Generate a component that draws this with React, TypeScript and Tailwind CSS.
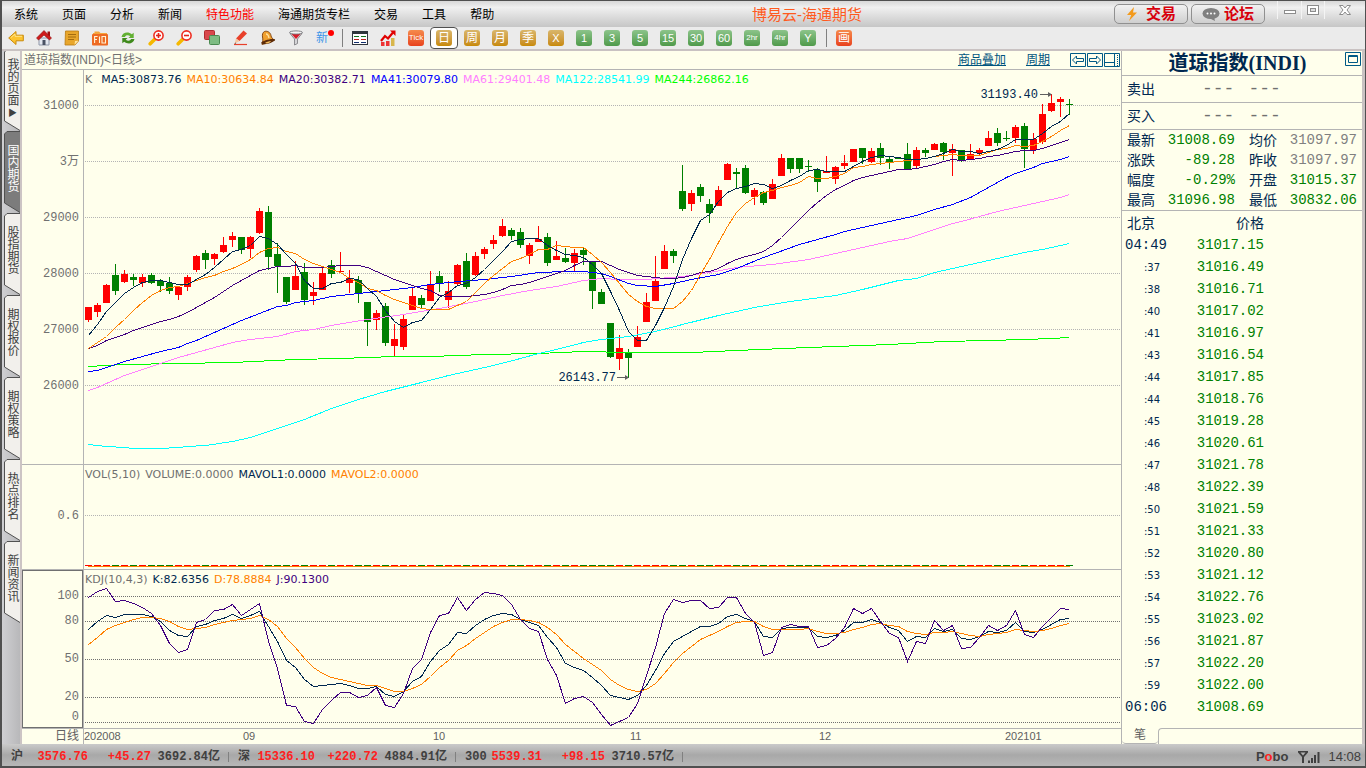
import { type ReactNode, useState } from 'react';

const MONO =
    "[font-family:'Liberation_Mono','Noto_Sans_CJK_SC',monospace]";
const SANS = "[font-family:'Liberation_Sans','Noto_Sans_CJK_SC',sans-serif]";
const LEGEND = "[font-family:'DejaVu_Sans','Noto_Sans_CJK_SC',sans-serif]";

const menus = [
    { name: '系统' },
    { name: '页面' },
    { name: '分析' },
    { name: '新闻' },
    { name: '特色功能', hot: true },
    { name: '海通期货专栏' },
    { name: '交易' },
    { name: '工具' },
    { name: '帮助' },
];

const sideTabs = [
    '国内期货',
    '股指期货',
    '期权报价',
    '期权策略',
    '热点排名',
    '新闻资讯',
];

const periods = [
    { name: 'Tick', tone: 'red' },
    { name: '日', tone: 'gold' },
    { name: '周', tone: 'gold' },
    { name: '月', tone: 'gold' },
    { name: '季', tone: 'gold' },
    { name: 'X', tone: 'gold' },
    { name: '1', tone: 'green' },
    { name: '3', tone: 'green' },
    { name: '5', tone: 'green' },
    { name: '15', tone: 'green' },
    { name: '30', tone: 'green' },
    { name: '60', tone: 'green' },
    { name: '2hr', tone: 'green' },
    { name: '4hr', tone: 'green' },
    { name: 'Y', tone: 'green' },
];

const quotes = [
    ['最新', '31008.69', '均价', '31097.97', false],
    ['涨跌', '-89.28', '昨收', '31097.97', false],
    ['幅度', '-0.29%', '开盘', '31015.37', true],
    ['最高', '31096.98', '最低', '30832.06', true],
] as const;

const ticks = [
    ['04:49', '31017.15'],
    [':37', '31016.49'],
    [':38', '31016.71'],
    [':40', '31017.02'],
    [':41', '31016.97'],
    [':43', '31016.54'],
    [':44', '31017.85'],
    [':44', '31018.76'],
    [':45', '31019.28'],
    [':46', '31020.61'],
    [':47', '31021.78'],
    [':48', '31022.39'],
    [':50', '31021.59'],
    [':51', '31021.33'],
    [':52', '31020.80'],
    [':53', '31021.12'],
    [':54', '31022.76'],
    [':55', '31023.02'],
    [':56', '31021.87'],
    [':57', '31022.20'],
    [':59', '31022.00'],
    ['06:06', '31008.69'],
];

const indexes = [
    { name: '沪', value: '3576.76', change: '+45.27', amount: '3692.84亿' },
    { name: '深', value: '15336.10', change: '+220.72', amount: '4884.91亿' },
    { name: '300', value: '5539.31', change: '+98.15', amount: '3710.57亿' },
];

// direction, body top, body bottom, high, low
type Candle = [0 | 1, number, number, number, number];

const candles: Candle[] = [
    [1, 307, 320, 307, 322], [1, 305, 312, 303, 317], [1, 285, 303, 284, 303],
    [0, 275, 291, 264, 295], [1, 274, 282, 270, 283], [0, 277, 280, 274, 286],
    [1, 277, 283, 274, 287], [0, 275, 283, 273, 284], [0, 281, 286, 279, 292],
    [0, 283, 291, 277, 294], [1, 287, 295, 287, 300], [1, 277, 287, 275, 291],
    [1, 256, 270, 255, 272], [0, 253, 260, 250, 269], [1, 254, 259, 253, 265],
    [1, 245, 252, 237, 253], [1, 236, 240, 232, 247], [0, 237, 250, 237, 254],
    [1, 237, 249, 236, 258], [1, 211, 233, 208, 234], [0, 212, 257, 206, 270],
    [0, 254, 266, 243, 293], [0, 277, 302, 277, 304], [1, 276, 290, 261, 290],
    [0, 272, 300, 263, 305], [1, 292, 296, 282, 305], [1, 273, 290, 267, 290],
    [0, 265, 274, 260, 278], [1, 271, 272, 252, 272], [1, 278, 283, 270, 293],
    [0, 280, 293, 276, 303], [0, 302, 322, 302, 346], [1, 313, 320, 310, 330],
    [0, 306, 343, 303, 346], [1, 339, 346, 324, 356], [1, 319, 347, 315, 350],
    [1, 296, 310, 288, 310], [0, 298, 305, 295, 309], [1, 285, 301, 271, 301],
    [0, 276, 284, 271, 292], [1, 291, 300, 281, 308], [1, 265, 284, 264, 285],
    [0, 261, 287, 253, 289], [1, 256, 275, 252, 276], [1, 249, 254, 247, 259],
    [1, 240, 244, 235, 249], [1, 226, 236, 219, 237], [0, 230, 236, 228, 240],
    [0, 232, 245, 228, 248], [1, 245, 256, 243, 264], [1, 239, 242, 226, 242],
    [0, 237, 263, 233, 266], [1, 256, 260, 241, 260], [0, 258, 262, 248, 263],
    [1, 253, 263, 249, 271], [0, 250, 255, 247, 265], [0, 262, 291, 261, 309],
    [0, 292, 304, 289, 304], [0, 323, 357, 323, 358], [1, 348, 359, 335, 370],
    [0, 353, 358, 349, 378], [1, 337, 347, 326, 347], [1, 302, 322, 293, 322],
    [1, 281, 301, 256, 301], [1, 251, 269, 245, 269], [0, 251, 256, 249, 263],
    [0, 191, 209, 165, 211], [1, 193, 204, 190, 211], [0, 187, 196, 184, 202],
    [0, 204, 213, 199, 223], [1, 190, 206, 186, 206], [1, 164, 180, 163, 180],
    [0, 172, 174, 168, 189], [0, 168, 193, 165, 194], [1, 190, 197, 188, 205],
    [0, 192, 203, 191, 205], [1, 184, 199, 179, 199], [1, 158, 176, 154, 176],
    [0, 158, 169, 158, 173], [0, 158, 169, 158, 173], [0, 166, 167, 160, 172],
    [0, 170, 182, 168, 192], [1, 171, 173, 156, 173], [1, 167, 179, 166, 184],
    [1, 163, 166, 155, 169], [1, 149, 162, 149, 162], [0, 148, 158, 148, 164],
    [1, 151, 162, 148, 163], [0, 148, 158, 143, 165], [0, 159, 162, 157, 169],
    [0, 158, 159, 158, 159], [0, 154, 170, 143, 170], [1, 150, 166, 147, 169],
    [0, 150, 153, 148, 157], [1, 144, 150, 143, 150], [0, 143, 152, 142, 160],
    [1, 149, 153, 144, 176], [0, 150, 161, 150, 162], [1, 154, 159, 144, 160],
    [1, 150, 153, 148, 156], [1, 138, 146, 131, 146], [0, 133, 143, 128, 146],
    [0, 138, 139, 131, 141], [1, 127, 138, 125, 143], [0, 126, 149, 123, 168],
    [1, 139, 150, 133, 154], [1, 114, 142, 104, 144], [1, 103, 111, 94, 112],
    [1, 99, 102, 97, 117], [0, 104, 105, 99, 115],
];

const ma5 = [
    335, 324, 311, 302, 293, 287, 282, 280, 280, 282, 284, 284, 279, 274, 267,
    259, 251, 249, 245, 236, 238, 244, 254, 263, 280, 288, 288, 283, 282, 278,
    279, 288, 296, 310, 321, 327, 322, 320, 309, 297, 292, 285, 283, 277, 269,
    260, 251, 241, 239, 238, 238, 245, 250, 254, 255, 257, 264, 273, 291, 310,
    331, 340, 340, 325, 307, 286, 259, 238, 220, 214, 201, 192, 188, 186, 183,
    184, 188, 185, 180, 176, 170, 169, 171, 171, 171, 166, 161, 157, 155, 156,
    157, 159, 159, 158, 156, 153, 149, 151, 151, 153, 151, 149, 145, 139, 139,
    139, 133, 126, 121, 113,
];

const ma10 = [
    348, 342, 336, 327, 319, 310, 302, 295, 290, 287, 286, 283, 280, 277, 275,
    271, 268, 264, 259, 252, 248, 247, 251, 253, 259, 263, 266, 269, 272, 278,
    282, 288, 290, 295, 299, 302, 305, 308, 309, 309, 309, 305, 301, 292, 283,
    275, 268, 261, 258, 254, 249, 249, 245, 246, 247, 247, 254, 262, 272, 283,
    294, 301, 306, 308, 308, 308, 301, 290, 274, 259, 242, 226, 212, 203, 197,
    192, 190, 187, 185, 182, 176, 178, 178, 176, 173, 167, 166, 164, 163, 162,
    161, 160, 159, 158, 156, 155, 154, 155, 155, 155, 152, 149, 148, 145, 146,
    145, 141, 136, 130, 125,
];

const ma20 = [
    348, 345, 340, 337, 334, 330, 327, 324, 321, 319, 316, 312, 307, 302, 297,
    291, 285, 280, 275, 270, 268, 266, 266, 265, 267, 267, 267, 266, 265, 265,
    265, 267, 271, 275, 279, 282, 285, 288, 290, 295, 296, 296, 296, 295, 294,
    292, 289, 285, 284, 282, 279, 276, 273, 270, 265, 261, 261, 261, 265, 269,
    272, 275, 276, 277, 278, 278, 277, 275, 272, 271, 268, 263, 259, 256, 254,
    251, 245, 237, 228, 219, 210, 202, 195, 189, 185, 180, 177, 175, 173, 171,
    169, 169, 168, 166, 164, 161, 159, 160, 159, 158, 156, 155, 153, 151, 150,
    150, 148, 145, 142, 139,
];

// the slow averages only need a point where they bend: [candle, y]
const ma41 = [
    [0, 371], [1, 370], [2, 367], [4, 361], [6, 356], [8, 351], [10, 347],
    [11, 343], [12, 340], [13, 336], [14, 332], [17, 320], [19, 313],
    [21, 306], [22, 305], [23, 302], [25, 300], [27, 296], [30, 293],
    [33, 290], [36, 287], [38, 284], [40, 282], [44, 279], [47, 276],
    [50, 272], [53, 271], [55, 271], [57, 273], [58, 276], [60, 283],
    [61, 285], [63, 286], [65, 283], [67, 279], [70, 274], [72, 268],
    [75, 257], [79, 244], [83, 234], [84, 231], [88, 223], [92, 215],
    [94, 209], [96, 204], [98, 197], [100, 187], [102, 177], [103, 173],
    [105, 167], [106, 163], [108, 159], [109, 156],
];

const ma61 = [
    [0, 390], [1, 387], [4, 375], [8, 363], [10, 357], [12, 352], [16, 342],
    [18, 339], [21, 336], [23, 331], [25, 329], [27, 325], [31, 319],
    [35, 314], [39, 308], [43, 301], [46, 295], [49, 290], [52, 286],
    [55, 280], [57, 278], [59, 279], [62, 279], [66, 276], [69, 272],
    [72, 267], [76, 264], [80, 259], [83, 253], [85, 249], [89, 241],
    [91, 238], [93, 232], [96, 223], [97, 221], [99, 216], [101, 211],
    [103, 207], [105, 203], [108, 197], [109, 194],
];

const ma122 = [
    [0, 444], [2, 446], [4, 447], [5, 448], [8, 448], [10, 447], [11, 446],
    [13, 445], [16, 441], [18, 437], [20, 431], [22, 425], [24, 419],
    [27, 408], [30, 399], [33, 391], [37, 382], [40, 375], [42, 371],
    [45, 365], [48, 358], [50, 353], [52, 349], [55, 342], [57, 339],
    [60, 336], [63, 331], [66, 324], [70, 315], [74, 307], [78, 301],
    [83, 295], [86, 289], [90, 280], [92, 278], [94, 272], [97, 266],
    [100, 260], [104, 252], [106, 249], [109, 243],
];

const ma244 = [
    [0, 366], [4, 364], [10, 363], [16, 362], [23, 359], [28, 358], [31, 357],
    [34, 356], [38, 356], [44, 354], [50, 353], [55, 351], [60, 352],
    [67, 352], [72, 350], [80, 347], [83, 346], [89, 344], [95, 341],
    [100, 340], [104, 339], [107, 338], [109, 337],
];

const lineJ = [
    597, 591, 588, 601, 600, 603, 607, 613, 625, 643, 652, 649, 622, 619, 610,
    609, 604, 615, 609, 603, 641, 668, 705, 706, 721, 723, 709, 700, 692, 692,
    697, 695, 687, 705, 707, 693, 668, 659, 632, 615, 613, 597, 610, 599, 592,
    593, 595, 604, 619, 628, 631, 659, 675, 703, 698, 696, 702, 714, 725, 721,
    717, 703, 675, 647, 613, 599, 602, 600, 600, 608, 607, 597, 597, 613, 622,
    655, 652, 627, 624, 626, 626, 647, 645, 638, 627, 608, 613, 608, 621, 633,
    637, 661, 641, 643, 620, 630, 625, 648, 647, 637, 625, 630, 625, 610, 634,
    637, 626, 617, 608, 609,
];

const lineK = [
    629, 621, 615, 617, 614, 614, 614, 616, 621, 630, 635, 636, 626, 624, 620,
    618, 614, 618, 615, 611, 626, 641, 660, 667, 679, 686, 685, 684, 683, 685,
    688, 688, 686, 694, 696, 691, 681, 676, 661, 650, 644, 632, 633, 625, 619,
    615, 613, 614, 619, 622, 625, 637, 647, 663, 667, 670, 677, 685, 695, 697,
    699, 695, 685, 670, 653, 641, 636, 631, 626, 626, 623, 616, 614, 618, 621,
    636, 637, 628, 627, 627, 627, 636, 637, 635, 630, 622, 622, 619, 622, 627,
    630, 641, 636, 637, 628, 631, 629, 638, 639, 636, 631, 632, 630, 622, 631,
    632, 629, 624, 619, 618,
];

const lineD = [
    644, 637, 629, 625, 622, 619, 617, 617, 618, 621, 626, 629, 628, 627, 624,
    622, 620, 619, 618, 615, 619, 626, 638, 647, 658, 667, 673, 677, 679, 681,
    683, 685, 685, 688, 691, 691, 688, 684, 676, 667, 660, 650, 645, 638, 632,
    626, 622, 619, 619, 620, 622, 627, 634, 644, 651, 658, 664, 670, 679, 685,
    689, 691, 689, 683, 673, 662, 653, 646, 639, 635, 631, 626, 622, 621, 621,
    626, 629, 629, 629, 629, 628, 631, 633, 633, 632, 629, 627, 624, 623, 625,
    626, 631, 633, 634, 632, 632, 631, 633, 635, 636, 634, 633, 632, 629, 630,
    631, 630, 628, 625, 623,
];

const STEP = 9;
const FIRST = 88;
const xAt = (i: number) => FIRST + i * STEP;
const everyCandle = (values: number[]) =>
    values.map((y, i) => `${xAt(i)},${y}`).join(' ');
const atBends = (values: number[][]) =>
    values.map(([i, y]) => `${xAt(i)},${y}`).join(' ');

const averages = [
    { color: '#00ff00', points: atBends(ma244) },
    { color: '#00ffff', points: atBends(ma122) },
    { color: '#ff80ff', points: atBends(ma61) },
    { color: '#0000ff', points: atBends(ma41) },
    { color: '#400080', points: everyCandle(ma20) },
    { color: '#ff8000', points: everyCandle(ma10) },
    { color: '#002850', points: everyCandle(ma5) },
];

function GridLines({ at, color }: { at: number[]; color: string }) {
    return (
        <>
            {at.map(y => (
                <line
                    key={y}
                    x1={85}
                    x2={1121}
                    y1={y + 0.5}
                    y2={y + 0.5}
                    stroke={color}
                    strokeDasharray="1 1"
                />
            ))}
        </>
    );
}

function Curve({ points, color }: { points: string; color: string }) {
    return (
        <polyline
            points={points}
            transform="translate(.5 .5)"
            fill="none"
            stroke={color}
            strokeWidth={1}
        />
    );
}

function PriceChart() {
    return (
        <svg
            viewBox="84 90 1037 374"
            preserveAspectRatio="xMinYMid meet"
            className="h-[374px] w-full overflow-visible"
        >
            <g shapeRendering="crispEdges">
                <GridLines
                    at={[105, 161, 217, 273, 329, 385]}
                    color="#b4b4b4"
                />
                {candles.map(([up, top, bottom, high, low], i) => (
                    <g key={i} fill={up ? '#ff0000' : '#008000'}>
                        <rect
                            x={xAt(i)}
                            y={high}
                            width={1}
                            height={low - high}
                        />
                        <rect
                            x={xAt(i) - 3}
                            y={top}
                            width={7}
                            height={bottom - top}
                        />
                    </g>
                ))}
                {averages.map(line => (
                    <Curve key={line.color} {...line} />
                ))}
            </g>
            <g className={`${MONO} text-[12px]`} fill="#002850">
                <text x={1038} y={98} textAnchor="end">
                    31193.40
                </text>
                <text x={616} y={381} textAnchor="end">
                    26143.77
                </text>
            </g>
            <g stroke="#606060" fill="#606060">
                <path d="M1040 94.5h9" />
                <path d="M1048 92l4 2.5-4 2.5z" stroke="none" />
                <path d="M617 377.5h9" />
                <path d="M625 375l4 2.5-4 2.5z" stroke="none" />
            </g>
        </svg>
    );
}

function VolumeChart() {
    return (
        <svg
            viewBox="84 485 1037 84"
            preserveAspectRatio="xMinYMid meet"
            className="h-[84px] w-full"
            shapeRendering="crispEdges"
        >
            <GridLines at={[515]} color="#b4b4b4" />
            {candles.map(([up], i) => (
                <rect
                    key={i}
                    x={xAt(i) - 3}
                    y={565}
                    width={7}
                    height={1}
                    fill={up ? '#ff0000' : '#008000'}
                />
            ))}
            <rect x={88} y={566} width={982} height={1} fill="#ff8000" />
        </svg>
    );
}

function KdjChart() {
    return (
        <svg
            viewBox="84 587 1037 141"
            preserveAspectRatio="xMinYMid meet"
            className="h-[141px] w-full"
            shapeRendering="crispEdges"
        >
            <GridLines at={[596, 621, 659, 697, 722]} color="#707070" />
            <Curve points={everyCandle(lineK)} color="#002850" />
            <Curve points={everyCandle(lineD)} color="#ff8000" />
            <Curve points={everyCandle(lineJ)} color="#400080" />
        </svg>
    );
}

function Icon({ children }: { children: ReactNode }) {
    return (
        <svg viewBox="0 0 16 16" className="size-4">
            {children}
        </svg>
    );
}

function Magnifier({ plus }: { plus?: boolean }) {
    return (
        <Icon>
            <path
                d="M6.5 9.5L2.2 13.8"
                stroke="#f5b800"
                strokeWidth="3.6"
                strokeLinecap="round"
            />
            <circle cx="10.5" cy="5.5" r="4.6" fill="#fff" stroke="#ee2c20" strokeWidth="1.6" />
            <path d="M8 5.5h5" stroke="#e2231a" strokeWidth="1.6" />
            {plus && <path d="M10.5 3v5" stroke="#e2231a" strokeWidth="1.6" />}
        </Icon>
    );
}

const tools: { name: string; icon: ReactNode }[] = [
    {
        name: '后退',
        icon: (
            <Icon>
                <path
                    d="M.7 8L8 1.5v3.7h7.3v5.6H8v3.7z"
                    fill="#fcc32f"
                    stroke="#c98a0a"
                />
                <path d="M3 7.5L7 4v2.3h7" fill="none" stroke="#ffe48a" />
            </Icon>
        ),
    },
    {
        name: '首页',
        icon: (
            <Icon>
                <path d="M3 8h10v7H3z" fill="#e4e8f0" stroke="#8f97a8" />
                <path d="M11.5 1.5H14v5h-2.5z" fill="#a01010" />
                <path d="M8 .5L.5 8l2 2L8 5l5.5 5 2-2z" fill="#cf1b1b" stroke="#8e0d0d" strokeWidth=".6" />
                <path d="M6.5 10h3v5h-3z" fill="#4a5264" />
            </Icon>
        ),
    },
    {
        name: '便笺',
        icon: (
            <Icon>
                <path d="M1.5 1h13v10L11 15H1z" fill="#e8a62b" stroke="#b97a10" strokeWidth=".8" />
                <path d="M4 4.5h8M4 7h8M4 9.5h6" stroke="#9c650c" strokeWidth=".9" />
                <path d="M10.500 15l.5-4 3.500-.3z" fill="#ffe29a" />
            </Icon>
        ),
    },
    {
        name: 'F10',
        icon: (
            <Icon>
                <path d="M1 3h1.5V1.5H7L8.5 3H15v4H1z" fill="#f5a53c" />
                <rect x="0" y="4" width="16" height="11.5" rx="1" fill="#ee6a22" />
                <path
                    d="M2.6 13V6.5h3M2.6 9.5H5M7.5 6.5V13M10 6.5h3.5V13H10z"
                    fill="none"
                    stroke="#fff3d6"
                    strokeWidth="1.1"
                />
            </Icon>
        ),
    },
    {
        name: '刷新',
        icon: (
            <Icon>
                <path d="M1.5 7C2.5 2 8.500 1.500 11.800 4.300l1.900-1.600V8H8.500l1.800-1.800C8 4.600 5.500 5.200 5 7z" fill="#62b032" />
                <path d="M14.500 9C13.500 14 7.500 14.500 4.200 11.700l-1.900 1.600V8h5.200L5.700 9.800C8 11.400 10.500 10.800 11 9z" fill="#3f8a1c" />
            </Icon>
        ),
    },
    { name: '放大', icon: <Magnifier plus /> },
    { name: '缩小', icon: <Magnifier /> },
    {
        name: '叠加',
        icon: (
            <Icon>
                <rect x=".5" y=".5" width="10" height="9" rx="1" fill="#d9484c" stroke="#b02c30" />
                <rect x="5.5" y="5.5" width="10" height="9" rx="1" fill="#7ebc83" stroke="#4b8a51" />
            </Icon>
        ),
    },
    {
        name: '画线',
        icon: (
            <Icon>
                <path d="M11.5 .5l3.5 3L7.5 11 4 8.500z" fill="#e8402a" />
                <path d="M4 8.5L7.5 11l-5 3z" fill="#f6c6a0" />
                <path d="M2.5 14l1.7-.8-.9-.8z" fill="#333" />
                <path d="M2 14.5h13" stroke="#e8402a" strokeWidth="1.2" />
            </Icon>
        ),
    },
    {
        name: '预警',
        icon: (
            <Icon>
                <path d="M4.5 1.5c3-1 6 1 6.500 4 .4 2 1.500 3.500 3.500 4.500L2 14.500C3 12 3 9.500 2.500 7c-.5-2.500.3-4.700 2-5.500z" fill="#f0a030" stroke="#7a3d0a" strokeWidth=".9" />
                <path d="M1 13c1-2 11-5 14-3.5 1 2-11 7-14 3.500z" fill="#5e2c08" />
                <path d="M5 13c1-1 4-2 6-2-1 2-4 3-6 2z" fill="#f6c060" />
                <path d="M6 4c1.500 0 2.500 1.500 3 4" fill="none" stroke="#ffe2a0" strokeWidth="1.3" />
            </Icon>
        ),
    },
    {
        name: '筛选',
        icon: (
            <Icon>
                <path d="M2 3.5L6.5 9v6l3-1.5V9L14 3.5z" fill="#d5d5d8" stroke="#77777c" strokeWidth=".8" />
                <path d="M3.5 4h9L8 9z" fill="#d81c2a" />
                <ellipse cx="8" cy="2.5" rx="6.5" ry="1.6" fill="#f2f2f2" stroke="#77777c" strokeWidth=".9" />
            </Icon>
        ),
    },
];

function ChartIcon() {
    return (
        <Icon>
            <path d="M1 12h3.5v4H1z" fill="#e33" />
            <path d="M6 11h3.5v5H6z" fill="#e33" />
            <path d="M11 8h3.5v8H11z" fill="#d8b64c" />
            <path d="M1 11l4-5 3 2.5 5-6" fill="none" stroke="#e00000" strokeWidth="2.2" />
            <path d="M10 .5h5.5V6z" fill="#e00000" />
        </Icon>
    );
}

function TableIcon() {
    return (
        <Icon>
            <rect x=".5" y="1.5" width="15" height="13" fill="#fff" stroke="#30363d" />
            <path d="M1 3h14" stroke="#30363d" strokeWidth="2" />
            <path d="M2 6.5h5M9 6.5h5" stroke="#12741c" />
            <path d="M2 9.5h5M9 9.5h5" stroke="#c01c1c" />
            <path d="M2 12.5h5M9 12.5h5" stroke="#12306e" />
        </Icon>
    );
}

function Divider() {
    return (
        <div className="flex w-2 justify-center">
            <span className="h-[18px] w-px bg-[#808080]" />
        </div>
    );
}

const toneClass: Record<string, string> = {
    red: 'bg-linear-to-b from-[#f58a4c] to-[#e8401c]',
    gold: 'bg-linear-to-b from-[#d9b66a] to-[#c88a00]',
    green: 'bg-linear-to-b from-[#8cc48a] to-[#4f9a4a]',
};

function labelSize(name: string) {
    if (name === 'Tick' || name.endsWith('hr')) return 'text-[8px]';
    return /^[0-9XY]/.test(name) ? 'text-[11px]' : 'text-[12px]';
}

function PeriodButton({
    name,
    tone,
    active,
    onClick,
}: {
    name: string;
    tone: string;
    active: boolean;
    onClick: () => void;
}) {
    return (
        <button
            type="button"
            onClick={onClick}
            className={`flex h-[22px] w-7 items-center justify-center rounded-sm border ${active ? 'border-[#505050] bg-white' : 'border-transparent'}`}
        >
            <span
                className={`flex size-4 items-center justify-center rounded-[3px] leading-4 text-white ${labelSize(name)} ${toneClass[tone]}`}
            >
                {name}
            </span>
        </button>
    );
}

function TitleBar() {
    return (
        <header className="flex h-[26px] items-center bg-linear-to-b from-[#d8d8d8] via-[#f0f0f0] via-25% to-[#c6c6c6]">
            <nav className="ml-3 pt-0.5">
                <ul className="flex gap-6 text-[12px] leading-4">
                    {menus.map(menu => (
                        <li key={menu.name}>
                            <button
                                type="button"
                                className={
                                    menu.hot ? 'text-[#ff0000]' : 'text-black'
                                }
                            >
                                {menu.name}
                            </button>
                        </li>
                    ))}
                </ul>
            </nav>
            <h1 className="flex-1 pt-0.5 pl-1.5 text-center text-[15px] leading-5 text-[#ff5a1e]">
                博易云-海通期货
            </h1>
            <div className="flex gap-[3px]">
                <button
                    type="button"
                    className="flex h-5 w-[74px] items-center justify-center gap-2 rounded-[5px] border border-[#909090] bg-linear-to-b from-[#f2f2f2] to-[#cfcfcf] text-[15px] leading-4 font-bold text-[#d8000c]"
                >
                    <svg viewBox="0 0 12 14" className="h-3.5 w-3">
                        <path d="M8 0L1 8h4.2L3 14l8-8.5H7z" fill="#f39a1c" />
                    </svg>
                    交易
                </button>
                <button
                    type="button"
                    className="flex h-5 w-[74px] items-center justify-center gap-1 rounded-[5px] border border-[#909090] bg-linear-to-b from-[#f2f2f2] to-[#cfcfcf] text-[15px] leading-4 font-bold text-[#d8000c]"
                >
                    <svg viewBox="0 0 18 14" className="h-3.5 w-[18px]">
                        <ellipse cx="9" cy="6.5" rx="8.5" ry="5.5" fill="#808080" />
                        <path d="M7 11l6 3-1-4z" fill="#808080" />
                        <circle cx="5.5" cy="6.5" r="1" fill="#fff" />
                        <circle cx="9" cy="6.5" r="1" fill="#fff" />
                        <circle cx="12.5" cy="6.5" r="1" fill="#fff" />
                    </svg>
                    论坛
                </button>
            </div>
            <div className="ml-3 flex self-start">
                <button
                    type="button"
                    aria-label="最小化"
                    className="flex h-[18px] w-6 items-center justify-center border-l border-[#f4f4f4]"
                >
                    <svg viewBox="0 0 12 12" className="size-3">
                        <rect x=".5" y="6.5" width="11" height="3" fill="#fff" stroke="#8c8c8c" />
                    </svg>
                </button>
                <button
                    type="button"
                    aria-label="最大化"
                    className="flex h-[18px] w-6 items-center justify-center border-x border-[#f4f4f4]"
                >
                    <svg viewBox="0 0 12 12" className="size-3">
                        <rect x=".5" y="1.5" width="11" height="9" fill="#fff" stroke="#8c8c8c" />
                        <rect x="3.5" y="4.5" width="5" height="3" fill="#ddd" stroke="#8c8c8c" />
                    </svg>
                </button>
                <button
                    type="button"
                    aria-label="关闭"
                    className="flex h-[18px] w-10 items-center justify-center"
                >
                    <svg viewBox="0 0 12 12" className="size-3">
                        <path d="M.5 1.5H4L6 4l2-2.5h3.5L8 6l3.5 4.5H8L6 8l-2 2.500H.5L4 6z" fill="#fff" stroke="#8c8c8c" />
                    </svg>
                </button>
            </div>
        </header>
    );
}

function Toolbar() {
    const [period, setPeriod] = useState('日');
    return (
        <div className="flex h-[24px] items-center border-b-2 border-[#c9c2c2] bg-[#ebebeb]">
            {tools.map(tool => (
                <button
                    key={tool.name}
                    type="button"
                    aria-label={tool.name}
                    className="flex w-7 justify-center"
                >
                    {tool.icon}
                </button>
            ))}
            <button
                type="button"
                className="relative w-7 pr-1 text-center text-[12px] leading-4 text-[#3d95e8]"
            >
                新
                <span className="absolute top-0 right-1 size-1.5 rounded-full bg-[#ff0000]" />
            </button>
            <Divider />
            <button
                type="button"
                aria-label="报价"
                className="flex w-7 justify-center"
            >
                <TableIcon />
            </button>
            <button
                type="button"
                aria-label="分时"
                className="flex w-7 justify-center"
            >
                <ChartIcon />
            </button>
            {periods.map(item => (
                <PeriodButton
                    key={item.name}
                    {...item}
                    active={item.name === period}
                    onClick={() => setPeriod(item.name)}
                />
            ))}
            <Divider />
            <PeriodButton
                name="画"
                tone="red"
                active={false}
                onClick={() => {}}
            />
        </div>
    );
}

function SideTab({
    name,
    active,
    first,
    onClick,
}: {
    name: string;
    active?: boolean;
    first?: boolean;
    onClick?: () => void;
}) {
    return (
        <button
            type="button"
            onClick={onClick}
            className={`grid w-[18px] justify-items-end ${first ? 'h-20' : 'h-[82px]'} ${active ? 'text-white' : 'text-[#404040]'}`}
        >
            <svg
                viewBox={first ? '0 2 16 80' : '0 0 16 82'}
                className={`col-start-1 row-start-1 w-4 ${first ? 'h-20' : 'h-[82px]'}`}
            >
                <path
                    d="M16 .5H3L.5 3v69L16 81.5"
                    fill={active ? '#7c7c7c' : '#f2f0ec'}
                    stroke="#505050"
                />
            </svg>
            <span
                className={`col-start-1 row-start-1 text-left text-[12px] leading-4 [writing-mode:vertical-rl] ${first ? 'pt-[7px]' : 'pt-[13px]'}`}
            >
                {name}
                {first && <span className="text-[9px]"> ▶</span>}
            </span>
        </button>
    );
}

function SideTabs() {
    const [current, setCurrent] = useState('国内期货');
    return (
        <nav className="w-5 shrink-0 border-r-2 border-[#ccc4c4] bg-linear-to-r from-[#cfcfd2] to-[#b8b8ba]">
            <SideTab name="我的页面" first />
            {sideTabs.map(name => (
                <SideTab
                    key={name}
                    name={name}
                    active={name === current}
                    onClick={() => setCurrent(name)}
                />
            ))}
        </nav>
    );
}

function Legend({
    items,
    className,
}: {
    items: [string, string][];
    className: string;
}) {
    return (
        <p
            className={`${LEGEND} flex gap-[5px] pl-px text-[11px] ${className}`}
        >
            {items.map(([label, color]) => (
                <span key={label} className={color}>
                    {label}
                </span>
            ))}
        </p>
    );
}

function ChartPanel() {
    return (
        <section className="flex min-w-0 flex-1 flex-col">
            <div className="flex h-[19px] items-center border-b border-[#b4b4b4] pl-0.5 text-[12px] leading-4">
                <h2 className="text-[#707070]">道琼指数(INDI)&lt;日线&gt;</h2>
                <div className="ml-auto flex gap-5 text-[#00547e] underline">
                    <a href="#overlay">商品叠加</a>
                    <a href="#period">周期</a>
                </div>
                <svg
                    viewBox="0 0 51 16"
                    className="ml-5 h-4 w-[51px]"
                    fill="none"
                    stroke="#005a86"
                >
                    <path d="M.5 1.5h15v13H.5zM17.5 1.5h15v13h-15zM34.5 1.5h15v13h-15z" />
                    <path d="M2.5 8l4-4v2.5h7v3h-7V12z" />
                    <path d="M30.5 8l-4-4v2.5h-7v3h7V12z" />
                    <path d="M34.5 10.5h10M44.5 1.5v13" />
                    <path d="M47.5 3v11" strokeDasharray="1 1" />
                </svg>
            </div>

            <div className="flex border-b border-[#b4b4b4]">
                <div
                    className={`${MONO} w-[62px] shrink-0 border-r border-[#b4b4b4] pt-2 pr-1 text-right text-[12px] text-[#707070]`}
                >
                    {['31000', '3万', '29000', '28000', '27000', '26000'].map(
                        label => (
                            <p key={label} className="h-14 leading-14">
                                {label}
                            </p>
                        )
                    )}
                </div>
                <div className="min-w-0 flex-1">
                    <Legend
                        className="h-5 leading-5"
                        items={[
                            ['K', 'mr-1 text-[#707070]'],
                            ['MA5:30873.76', 'text-[#002850]'],
                            ['MA10:30634.84', 'text-[#ff8000]'],
                            ['MA20:30382.71', 'text-[#400080]'],
                            ['MA41:30079.80', 'text-[#0000ff]'],
                            ['MA61:29401.48', 'text-[#ff80ff]'],
                            ['MA122:28541.99', 'text-[#00ffff]'],
                            ['MA244:26862.16', 'text-[#00ff00]'],
                        ]}
                    />
                    <PriceChart />
                </div>
            </div>

            <div className="flex border-b border-[#b4b4b4]">
                <div
                    className={`${MONO} flex w-[62px] shrink-0 items-center justify-end border-r border-[#b4b4b4] pr-1 pb-0.5 text-[12px] text-[#707070]`}
                >
                    0.6
                </div>
                <div className="min-w-0 flex-1">
                    <Legend
                        className="h-5 leading-5"
                        items={[
                            ['VOL(5,10)', 'text-[#707070]'],
                            ['VOLUME:0.0000', 'text-[#707070]'],
                            ['MAVOL1:0.0000', 'text-[#002850]'],
                            ['MAVOL2:0.0000', 'text-[#ff8000]'],
                        ]}
                    />
                    <VolumeChart />
                </div>
            </div>

            <div className="flex border-b border-[#b4b4b4]">
                <div className="w-[62px] shrink-0 border-r border-[#b4b4b4]">
                    <div
                        className={`${MONO} h-full border border-[#707070] pt-[15px] pr-[3px] text-right text-[12px] leading-5 text-[#707070]`}
                    >
                        <p>100</p>
                        <p className="mt-[5px]">80</p>
                        <p className="mt-[18px]">50</p>
                        <p className="mt-[18px]">20</p>
                        <p>0</p>
                    </div>
                </div>
                <div className="min-w-0 flex-1">
                    <Legend
                        className="h-[17px] leading-5"
                        items={[
                            ['KDJ(10,4,3)', 'text-[#707070]'],
                            ['K:82.6356', 'text-[#002850]'],
                            ['D:78.8884', 'text-[#ff8000]'],
                            ['J:90.1300', 'text-[#400080]'],
                        ]}
                    />
                    <KdjChart />
                </div>
            </div>

            <div className="flex text-[11px] leading-[15px] text-[#606060]">
                <p className="w-[62px] shrink-0 border-r border-[#b4b4b4] pr-1 text-right text-[12px]">
                    日线
                </p>
                <p className="w-[159px]">202008</p>
                <p className="w-[190px]">09</p>
                <p className="w-[197px]">10</p>
                <p className="w-[189px]">11</p>
                <p className="w-[186px]">12</p>
                <p className="flex-1">202101</p>
            </div>
        </section>
    );
}

function QuotePanel() {
    return (
        <aside className="flex w-[241px] shrink-0 flex-col border-l border-[#b4b4b4] text-[14px] text-[#002850]">
            <div className="flex h-[25px] items-center border-b border-[#b4b4b4]">
                <h2 className="flex-1 pl-2 text-center text-[20px] leading-6 font-bold [font-family:'Liberation_Serif','Noto_Sans_CJK_SC',serif]">
                    道琼指数(INDI)
                </h2>
                <button
                    type="button"
                    aria-label="展开"
                    className="mr-px self-start"
                >
                    <svg
                        viewBox="0 0 16 16"
                        className="size-4"
                        fill="none"
                        stroke="#005a86"
                    >
                        <path d="M.5 1.5h15v13H.5zM3.5 4.5h9v7h-9zM3.5 5.5h9" />
                    </svg>
                </button>
            </div>
            {['卖出', '买入'].map(side => (
                <div
                    key={side}
                    className="flex h-[27px] items-center border-b border-[#b4b4b4] pl-[5px] leading-5"
                >
                    <span className="w-[75px]">{side}</span>
                    <span
                        className={`${MONO} flex gap-3.5 text-[18px] text-[#707070]`}
                    >
                        <span>---</span>
                        <span>---</span>
                    </span>
                </div>
            ))}
            <dl className="grid grid-cols-[28px_80px_42px_80px] border-b border-[#b4b4b4] pl-[5px] leading-5">
                {quotes.map(([name, value, other, otherValue, green]) => (
                    <div key={name} className="contents">
                        <dt>{name}</dt>
                        <dd className={`${MONO} text-right text-[#008000]`}>
                            {value}
                        </dd>
                        <dt className="text-right">{other}</dt>
                        <dd
                            className={`${MONO} text-right ${green ? 'text-[#008000]' : 'text-[#808080]'}`}
                        >
                            {otherValue}
                        </dd>
                    </div>
                ))}
            </dl>
            <table className="w-[142px] table-fixed">
                <thead>
                    <tr className="h-[23px] leading-5">
                        <th className="w-[45px] p-0 pl-[5px] text-left font-normal">
                            北京
                        </th>
                        <th className="p-0 text-right font-normal">价格</th>
                    </tr>
                </thead>
                <tbody>
                    {ticks.map(([time, price]) => (
                        <tr key={`${time}${price}`} className="h-[22px]">
                            <td
                                className={`p-0 text-right ${time.startsWith(':') ? `${LEGEND} pr-[7px] text-[10px]` : MONO}`}
                            >
                                {time}
                            </td>
                            <td
                                className={`${MONO} p-0 text-right text-[#008000]`}
                            >
                                {price}
                            </td>
                        </tr>
                    ))}
                </tbody>
            </table>
            <div className="mt-auto flex h-4 text-[12px] leading-4 text-[#606060]">
                <button
                    type="button"
                    className="w-9 rounded-b-sm border-b border-[#b4b4b4] leading-[15px]"
                >
                    笔
                </button>
                <span className="flex-1 rounded-tl-sm border-t border-l border-[#b4b4b4]" />
            </div>
        </aside>
    );
}

function StatusBar() {
    return (
        <footer
            className={`${MONO} flex h-6 items-center border-b-2 border-[#505050] bg-linear-to-b from-[#cacaca] via-[#a8a8a8] to-[#b8b8b8] pt-[3px] pl-[9px] text-[12px] leading-4 font-bold text-[#404040]`}
        >
            {indexes.map(item => (
                <div key={item.name} className="flex items-center">
                    <p className="flex w-[77px] justify-between">
                        <span>{item.name}</span>
                        <span className="text-[#ff2020]">{item.value}</span>
                    </p>
                    <p className="w-[63px] text-right text-[#ff2020]">
                        {item.change}
                    </p>
                    <p className="w-[69px] text-right">{item.amount}</p>
                    <span className="mr-[9px] ml-2 h-2.5 w-px bg-[#808080]" />
                </div>
            ))}
            <p className={`${SANS} ml-auto text-[13px]`}>
                P<span className="text-[#ff2020]">o</span>bo
            </p>
            <svg
                viewBox="0 0 22 12"
                className="ml-2.5 h-3 w-[22px]"
                fill="#404040"
            >
                <path d="M0 0h10v1.5L6 6v6H4V6L0 1.5z" />
                <path d="M2.5 1.5h5L5 4.5z" fill="#b4b4b4" />
                <path d="M10 9.5h2V12h-2zM13 7h2v5h-2zM16 4h2v8h-2zM19.5 1h2v11h-2z" />
            </svg>
            <time className={`${SANS} mr-1 ml-2 text-[13px] font-normal`}>
                14:08
            </time>
        </footer>
    );
}

export default function App() {
    return (
        <div
            className={`${SANS} flex min-h-screen flex-col border-t border-r border-l-2 border-[#505050] bg-[#ffffec]`}
        >
            <TitleBar />
            <Toolbar />
            <main className="flex flex-1 border-r-3 border-[#c9c2c2]">
                <SideTabs />
                <ChartPanel />
                <QuotePanel />
            </main>
            <StatusBar />
        </div>
    );
}
